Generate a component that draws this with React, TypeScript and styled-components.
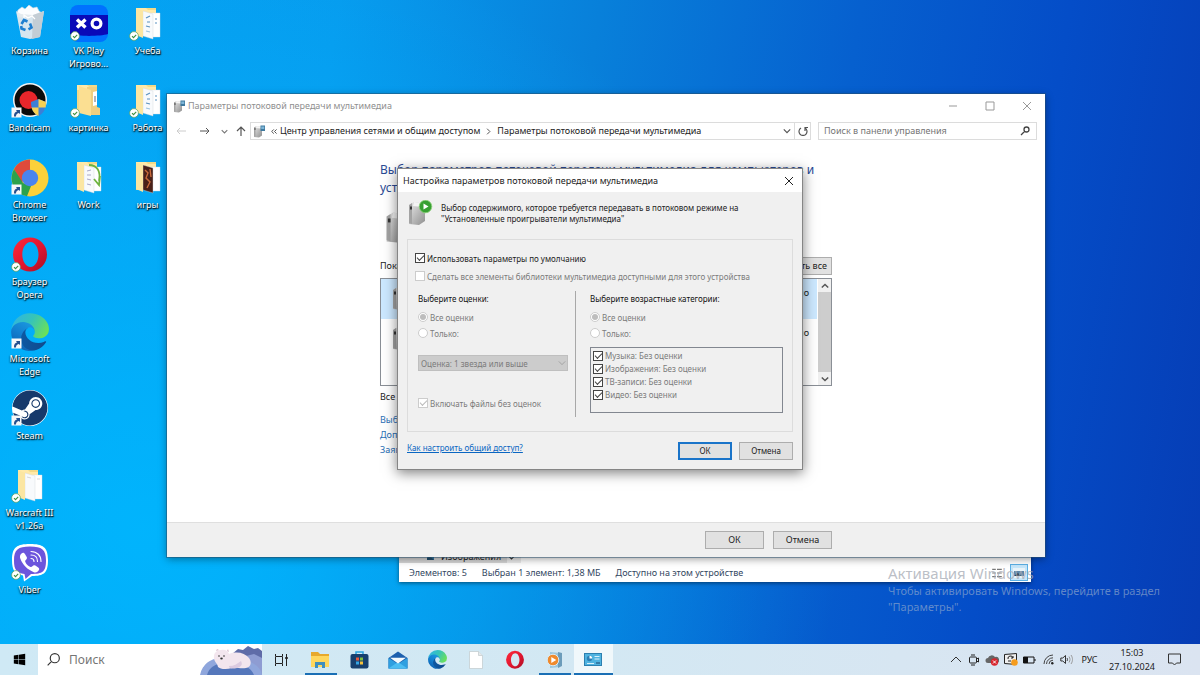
import React, { useId } from "react";
import styled, { createGlobalStyle, css } from "styled-components";
import { FaSteam, FaWindows } from "react-icons/fa";

const ui = `"Noto Sans", "Open Sans", sans-serif`;

const GlobalStyle = createGlobalStyle`
  * { box-sizing: border-box; }
  body { margin: 0; font-family: ${ui}; font-size: 9px; line-height: 14px; color: #222; }
  button, input, select { font: inherit; color: inherit; margin: 0; }
  h1, h2, p, ul { margin: 0; padding: 0; font-weight: 400; }
  ul { list-style: none; }
  svg { display: block; flex: none; }
`;

/* ---------- desktop ---------- */

const Screen = styled.div`
  display: flex;
  flex-direction: column;
  min-height: 100vh;
  background:
    radial-gradient(ellipse 58% 90% at 12% 78%, rgba(0, 184, 255, 0.85), rgba(0, 168, 255, 0) 100%),
    linear-gradient(99deg, #04a2f2 0%, #079bee 26%, #0880da 46%, #0660cf 66%, #044dc8 82%, #063cb4 100%);
  overflow: hidden;
`;

const Desktop = styled.main`
  position: relative;
  flex: 1;
  min-height: 600px;
`;

const IconColumns = styled.div`
  display: flex;
`;

const IconColumn = styled.ul`
  display: flex;
  flex-direction: column;
  width: 59px;
`;

const Shortcut = styled.li`
  display: flex;
  flex-direction: column;
  align-items: center;
  gap: 1px;
  height: 77px;
  padding-top: 5px;
  color: #fff;
  font-size: 9px;
  line-height: 13px;
  text-align: center;
  white-space: pre-line;
  text-shadow: 0 1px 2px #000, 1px 1px 1px rgba(0, 0, 0, 0.8);
`;

const Picture = styled.div`
  position: relative;
  width: 38px;
  height: 38px;
`;

const Badge = styled.div`
  position: absolute;
  left: 0;
  bottom: 2px;
`;

const SyncBadge = () => (
  <Badge>
    <svg width="10" height="10" viewBox="0 0 10 10">
      <circle cx="5" cy="5" r="4.4" fill="#fff" stroke="#5aa05a" strokeWidth=".7" />
      <path d="M3 5.1l1.5 1.5L7.2 3.8" fill="none" stroke="#3f8f3f" strokeWidth="1.1" />
    </svg>
  </Badge>
);

const LinkBadge = () => (
  <Badge>
    <svg width="11" height="11" viewBox="0 0 11 11">
      <rect x=".5" y=".5" width="10" height="10" fill="#f7f7f7" />
      <path d="M3 9.5C2.8 6.500 4 5 6 4.600L5 3h4v4L7.800 6C5.800 6.500 5 7.500 5 9.500z" fill="#24508f" />
    </svg>
  </Badge>
);

const BinIcon = () => (
  <svg width="38" height="38" viewBox="0 0 38 38">
    <path d="M7 5l4-3 3 2 4-4 4 3 4-1 2 4 3 2-2 4H8L6 8z" fill="#fbfdff" stroke="#c5d6e2" strokeWidth=".6" />
    <path d="M5 6l5 3 12 1 11-4-4 26-10 2-9-2z" fill="#e2e9ee" opacity=".95" />
    <path d="M22 10l11-4-4 26-8 2z" fill="#c3cdd5" />
    <path d="M13 14v-4l4 3 4-2 3 3" fill="none" stroke="#fff" strokeWidth="1.200" />
    <g fill="none" stroke="#1f7fd0" strokeWidth="2.600">
      <path d="M10.500 19l2.500-4 3.500 1.500" /><path d="M19 18.500l1.500 4-3 1.800" /><path d="M14.500 25l-4-1.500-.3-2.500" />
    </g>
  </svg>
);

const VkPlayIcon = () => (
  <svg width="38" height="38" viewBox="0 0 38 38">
    <rect width="38" height="37" rx="8" fill="#0072ff" />
    <path d="M0 10h38v19c-8 2.500-30 2.500-38 0z" fill="#0a0ab8" />
    <path d="M7 14.500l8.500 8M15.500 14.500l-8.500 8" stroke="#fff" strokeWidth="3.400" />
    <circle cx="26.500" cy="18.500" r="4.400" fill="none" stroke="#fff" strokeWidth="3.200" />
  </svg>
);

const BandicamIcon = () => (
  <svg width="38" height="38" viewBox="0 0 38 38">
    <circle cx="19" cy="18" r="17" fill="#f4f4f4" />
    <circle cx="19" cy="18" r="15.500" fill="#0b0b0b" />
    <circle cx="17.500" cy="18" r="9" fill="#e8262b" />
    <path d="M20 20l7.500-3 7.500 3c0 7-2.500 11.500-7.500 14-5-2.500-7.500-7-7.500-14z" fill="#3c7fd6" />
    <path d="M27.500 17l7.500 3c0 2 0 3.500-.6 5.500h-6.900zM27.500 25.500V34c-3.600-1.800-6-4.500-7-8.500z" fill="#f7d154" />
  </svg>
);

const ChromeIcon = () => (
  <svg width="38" height="38" viewBox="0 0 38 38">
    <circle cx="19" cy="19" r="18.500" fill="#fbd13a" />
    <path d="M19 .500V12L10.500 24 3 10A18.500 18.500 0 0 1 19 .500z" fill="#df4a3b" />
    <path d="M3 10L12 24l8 3-4 10.300A18.500 18.500 0 0 1 3 10z" fill="#2ba24c" />
    <circle cx="19" cy="19" r="8.200" fill="#4a84ee" />
  </svg>
);

const OperaIcon = ({ size = 38 }: { size?: number }) => {
  const id = useId();
  return (
    <svg width={size} height={size} viewBox="0 0 38 38">
      <defs>
        <linearGradient id={id} x1="0" y1="0" x2="1" y2="1">
          <stop offset="0" stopColor="#ff2b3a" /><stop offset=".55" stopColor="#e01530" /><stop offset="1" stopColor="#a80f22" />
        </linearGradient>
      </defs>
      <path fillRule="evenodd" fill={`url(#${id})`} d="M19 1.500a17 17 0 1 0 0 34 17 17 0 0 0 0-34zM19.500 6c4.500 0 8 5.600 8 12.500S24 31 19.500 31s-8.200-5.600-8.200-12.500S15 6 19.500 6z" />
    </svg>
  );
};

const EdgeIcon = ({ size = 38 }: { size?: number }) => {
  const id = useId();
  return (
    <svg width={size} height={size} viewBox="4 4 257 257">
      <defs>
        <linearGradient id={id + "a"} x1="0" y1="0" x2="1" y2="0">
          <stop offset="0" stopColor="#0c59a4" /><stop offset="1" stopColor="#114a8b" />
        </linearGradient>
        <linearGradient id={id + "b"} x1=".8" y1="0" x2=".3" y2="1">
          <stop offset="0" stopColor="#1b9de2" /><stop offset=".5" stopColor="#1380d0" /><stop offset="1" stopColor="#0b5fb0" />
        </linearGradient>
        <linearGradient id={id + "c"} x1="0" y1=".2" x2="1" y2=".6">
          <stop offset="0" stopColor="#2fb4e4" /><stop offset=".5" stopColor="#36c4b8" /><stop offset="1" stopColor="#6be05a" />
        </linearGradient>
      </defs>
      <path fill={`url(#${id}a)`} d="M235.680 195.460a93.730 93.730 0 01-10.540 4.710 101.870 101.870 0 01-35.900 6.460c-47.320 0-88.540-32.550-88.540-74.320A31.480 31.480 0 01117.130 105c-42.800 1.800-53.800 46.400-53.800 72.530 0 73.880 68.090 81.370 82.760 81.370 7.910 0 19.840-2.300 27-4.560l1.310-.44a128.340 128.340 0 0066.600-52.800 4 4 0 00-5.320-5.640z" />
      <path fill={`url(#${id}b)`} d="M110.340 246.340A79.200 79.200 0 0187.600 225a80.720 80.720 0 0129.530-120c3.120-1.470 8.450-4.130 15.540-4a32.350 32.350 0 0125.690 13 31.880 31.880 0 016.360 18.660c0-.21 24.460-79.600-80-79.600-43.900 0-80 41.660-80 78.210a130.150 130.150 0 0012.110 56 128 128 0 00156.380 67.110 75.550 75.550 0 01-62.780-8z" />
      <path fill={`url(#${id}c)`} d="M156.940 153.780c-.81 1.050-3.300 2.500-3.300 5.660 0 2.610 1.700 5.120 4.720 7.230 14.380 10 41.490 8.680 41.560 8.680a59.560 59.560 0 0030.270-8.350 61.380 61.380 0 0030.430-52.880c.26-22.410-8-37.310-11.340-43.910C228.090 28.760 182.350 4.920 132.630 4.920A128 128 0 004.630 131.120c.48-36.540 36.800-66.050 80-66.050 3.500 0 23.460.34 42 10.070 16.340 8.580 24.900 18.940 30.850 29.210 6.180 10.670 7.280 24.150 7.280 29.520s-2.740 13.330-7.820 19.910z" />
    </svg>
  );
};

const SteamArt = styled.div`
  width: 36px;
  height: 36px;
  margin: 0 1px;
  border-radius: 18px;
  background: #fff;
  color: #16396b;
  font-size: 36px;
`;

const SteamIcon = () => (
  <SteamArt><FaSteam /></SteamArt>
);

const ViberIcon = () => (
  <svg width="38" height="38" viewBox="0 0 38 38">
    <path d="M19 0c13 0 18 3 18 16s-4 16-16 16l-8 5.500-1-6C4 30 1 27 1 16 1 3 6 0 19 0z" fill="#fff" />
    <path d="M19 2.500c12 0 16 3 16 14s-3 13.500-15 13.500l-5.500 5-1-5C5.500 28.500 3 26 3 16.500 3 5.500 7 2.500 19 2.500z" fill="#6c55dc" />
    <path d="M20 11c4 0 6.500 2.500 6.500 6.500M20 7.500c6 0 10 4 10 10M20 14.500c1.800 0 3 1 3 3" fill="none" stroke="#fff" strokeWidth="1.100" strokeLinecap="round" />
    <path d="M10.500 9.500c1.500-1.200 2.600-.8 3.600.8l1.600 2.700c.6 1.200.2 2-.9 2.900-.9.700-.7 1.500-.2 2.500 1 2 2.400 3.400 4.400 4.300 1 .5 1.700.4 2.400-.5.900-1.100 1.800-1.300 2.900-.6l2.600 1.700c1.500 1 1.700 2 .7 3.300-1.200 1.600-2.800 2.400-4.800 1.600-6.500-2.500-11-7-13.500-13.600-.7-2-.3-3.800 1.200-5.100z" fill="#fff" />
  </svg>
);

type FolderKind = "doc" | "plain" | "blank" | "work" | "game";

const FolderIcon = ({ kind }: { kind: FolderKind }) => (
  <svg width="38" height="38" viewBox="0 0 38 38">
    <path d="M7 3h20v28H7z" fill="#f3d987" />
    <path d="M7 3h10l2 2h8v3H7z" fill="#ffe9a8" />
    {kind === "plain" ? (
      <>
        <path d="M17 5h10v20l3 1v7H17z" fill="#f0cf80" />
        <path d="M23 10l4-1v14l-4 1z" fill="#fff" /><path d="M25 14v6" stroke="#667" />
        <path d="M9 4l12 4v26L9 31z" fill="#fbdf92" />
      </>
    ) : (
      <>
        <path d="M21 8h10v24H21z" fill="#fff" stroke="#d5dbe0" strokeWidth=".4" />
        <path d="M14 6l10 3v25l-10-3z" fill={kind === "game" ? "#4a2118" : "#f8fafc"} stroke="#d0d4d8" strokeWidth=".4" />
        <path d="M7 3l7 3v27l-7-3z" fill="#fbe6a2" />
      </>
    )}
    {kind === "doc" && (
      <g fill="none" stroke="#5c92c0" strokeWidth="1.200">
        <path d="M17 13l4-2M18 17h3M17 21l4 1M26 14h2M26 18h2" /><path d="M17 26l4 1" stroke="#9ac3e0" />
      </g>
    )}
    {kind === "blank" && <path d="M16 10l4 1M26 12h3" stroke="#d7d7d7" fill="none" />}
    {kind === "work" && (
      <>
        <path d="M17 12l4-1M17 16h4M17 20l4 1M17 25l4 1" stroke="#a9a9c8" fill="none" />
        <path d="M19 6c8 0 12 6 10 16M30 17l-1 9-5-6" stroke="#6db33f" strokeWidth="1.800" fill="none" />
      </>
    )}
    {kind === "game" && <path d="M16 11l3 3-2 5 4 4-3 6M21 10l1 8" stroke="#c8693a" strokeWidth="1.400" fill="none" />}
  </svg>
);

type ShortcutItem = { label: string; art: React.ReactNode; badge?: "sync" | "link" };

const columns: ShortcutItem[][] = [
  [
    { label: "Корзина", art: <BinIcon /> },
    { label: "Bandicam", art: <BandicamIcon />, badge: "link" },
    { label: "Chrome\nBrowser", art: <ChromeIcon />, badge: "link" },
    { label: "Браузер\nOpera", art: <OperaIcon />, badge: "sync" },
    { label: "Microsoft\nEdge", art: <EdgeIcon />, badge: "link" },
    { label: "Steam", art: <SteamIcon />, badge: "link" },
    { label: "Warcraft III\nv1.26a", art: <FolderIcon kind="blank" />, badge: "sync" },
    { label: "Viber", art: <ViberIcon />, badge: "sync" },
  ],
  [
    { label: "VK Play\nИгрово...", art: <VkPlayIcon />, badge: "sync" },
    { label: "картинка", art: <FolderIcon kind="plain" />, badge: "sync" },
    { label: "Work", art: <FolderIcon kind="work" /> },
  ],
  [
    { label: "Учеба", art: <FolderIcon kind="doc" />, badge: "sync" },
    { label: "Работа", art: <FolderIcon kind="doc" />, badge: "sync" },
    { label: "игры", art: <FolderIcon kind="game" /> },
  ],
];

/* ---------- shared controls ---------- */

const GlyphButton = styled.button<{ $width?: number }>`
  display: flex;
  align-items: center;
  justify-content: center;
  flex: none;
  width: ${(p) => p.$width ?? 24}px;
  height: 100%;
  padding: 0;
  border: 0;
  background: none;
`;

const PushButton = styled.button<{ $primary?: boolean; $small?: boolean }>`
  flex: none;
  min-width: ${(p) => (p.$small ? 54 : 59)}px;
  height: 18px;
  padding: 0 4px;
  border: ${(p) => (p.$primary ? "2px solid #1a74c9" : "1px solid #adadad")};
  background: #e1e1e1;
  font-size: ${(p) => (p.$small ? 8 : 9)}px;
  line-height: 14px;
  white-space: nowrap;
`;

const Glyph = ({ d, size = 10, color = "#555", width = 1 }: { d: string; size?: number; color?: string; width?: number }) => (
  <svg width={size} height={size} viewBox="0 0 10 10" fill="none" stroke={color} strokeWidth={width}>
    <path d={d} />
  </svg>
);

const ServerIcon = ({ size, badge }: { size: number; badge?: "play" | "screen" }) => {
  const id = useId();
  return (
    <svg width={size} height={size} viewBox="0 0 24 26">
      <defs>
        <linearGradient id={id} x1="0" y1="0" x2="1" y2="1">
          <stop offset="0" stopColor="#e8e8e8" /><stop offset="1" stopColor="#8f8f8f" />
        </linearGradient>
      </defs>
      <path d="M1 5l5-3 11 2v17l-6 4-10-1z" fill={`url(#${id})`} />
      <path d="M1 5l3-2v21l-3-1z" fill="#a3a3a3" />
      <path d="M6 2l11 2-3 3-9-1z" fill="#f4f4f4" />
      <path d="M2 6.500h2v3H2z" fill="#333" />
      {badge === "play" && (
        <>
          <circle cx="17.500" cy="6.500" r="6.300" fill="#37a032" stroke="#8fd07c" strokeWidth=".8" />
          <path d="M15.500 3.500l5 3-5 3z" fill="#fff" />
        </>
      )}
      {badge === "screen" && (
        <>
          <rect x="14" y="1" width="9" height="11" fill="#3f7a9f" />
          <rect x="15.500" y="3" width="6" height="5" fill="#7fb6d8" />
        </>
      )}
    </svg>
  );
};

/* ---------- explorer window behind ---------- */

const ExplorerWindow = styled.section`
  position: absolute;
  left: 399px;
  top: 540px;
  width: 632px;
  height: 42px;
  display: flex;
  flex-direction: column;
  background: #fff;
  box-shadow: 0 1px 4px rgba(0, 0, 0, 0.5);
`;

const TreeRow = styled.div`
  display: flex;
  align-items: center;
  gap: 7px;
  width: 122px;
  height: 23px;
  padding: 11px 4px 0 28px;
  background: linear-gradient(90deg, #d5d5d5 108px, #ebebeb 108px);
`;

const StatusBar = styled.footer`
  display: flex;
  align-items: center;
  gap: 15px;
  flex: 1;
  padding: 0 3px 0 10px;
  font-size: 9px;
  color: #33475f;
`;

const ViewModes = styled.div`
  display: flex;
  align-items: center;
  gap: 4px;
  margin-left: auto;
`;

const ViewMode = styled.button<{ $on?: boolean }>`
  display: grid;
  place-items: center;
  width: 18px;
  height: 17px;
  padding: 0;
  border: ${(p) => (p.$on ? "1px solid #5bb0e6" : "0")};
  background: ${(p) => (p.$on ? "#c5e6fa" : "none")};
`;

/* ---------- control panel window ---------- */

const PanelWindow = styled.section`
  position: absolute;
  left: 167px;
  top: 94px;
  width: 878px;
  height: 463px;
  display: flex;
  flex-direction: column;
  background: #fff;
  box-shadow: 0 0 0 1px rgba(40, 80, 110, 0.5), 0 2px 8px rgba(0, 0, 0, 0.4);
`;

const PanelTitle = styled.header`
  display: flex;
  align-items: center;
  gap: 2px;
  height: 24px;
  padding: 0 1px 0 6px;
  color: #8f8f8f;
`;

const Caption = styled.h1`
  flex: 1;
  font-size: 9px;
  line-height: 14px;
`;

const NavBar = styled.nav`
  display: flex;
  align-items: center;
  height: 26px;
  padding: 0 8px 0 2px;
`;

const Address = styled.div`
  display: flex;
  align-items: center;
  flex: 1;
  height: 18px;
  margin-right: 7px;
  border: 1px solid #dcdcdc;
`;

const Crumb = styled.button`
  padding: 0;
  border: 0;
  background: none;
  font-size: 9px;
  line-height: 14px;
  color: #222;
  white-space: nowrap;
`;

const CrumbSpacer = styled.span`
  flex: 1;
`;

const Reload = styled.div`
  height: 100%;
  border-left: 1px solid #dcdcdc;
`;

const SearchField = styled.label`
  display: flex;
  align-items: center;
  width: 219px;
  height: 18px;
  padding: 0 6px 0 5px;
  border: 1px solid #dcdcdc;
`;

const SearchInput = styled.input`
  flex: 1;
  min-width: 0;
  padding: 0;
  border: 0;
  outline: 0;
  background: none;
  color: #222;
  &::placeholder { color: #757575; opacity: 1; }
`;

const PanelBody = styled.div`
  flex: 1;
  width: 452px;
  margin: 0 auto;
  padding-top: 17px;
  line-height: 15px;
`;

const Heading = styled.h2`
  font-size: 12px;
  line-height: 18px;
  color: #2a4a94;
`;

const NameRow = styled.div`
  display: flex;
  align-items: center;
  height: 60px;
  padding-left: 4px;
`;

const ToolbarRow = styled.div`
  display: flex;
  align-items: center;
  justify-content: space-between;
  height: 17px;
  margin-bottom: 4px;
`;

const DeviceList = styled.div`
  display: flex;
  height: 108px;
  margin-bottom: 3px;
  border: 1px solid #8a8f96;
`;

const Devices = styled.ul`
  flex: 1;
`;

const Device = styled.li<{ $selected?: boolean }>`
  display: flex;
  justify-content: space-between;
  height: 40px;
  padding: 6px 8px 0 10px;
  margin-right: 1px;
  background: ${(p) => (p.$selected ? "#cce8ff" : "none")};
`;

const Scrollbar = styled.div`
  display: flex;
  flex-direction: column;
  width: 13px;
  background: #cdcdcd;
`;

const ScrollButton = styled.button`
  display: grid;
  place-items: center;
  height: 13px;
  padding: 0;
  border: 0;
  background: #f0f0f0;
`;

const ScrollTrack = styled.div`
  flex: 1;
`;

const Links = styled.ul`
  margin-top: 8px;
`;

const PanelLink = styled.a`
  color: #2a6fb5;
  text-decoration: none;
`;

const PanelFooter = styled.footer`
  display: flex;
  align-items: center;
  justify-content: flex-end;
  gap: 9px;
  height: 35px;
  padding-right: 213px;
  border-top: 1px solid #dfdfdf;
  background: #f0f0f0;
`;

/* ---------- dialog ---------- */

const DialogWindow = styled.section`
  position: absolute;
  left: 398px;
  top: 169px;
  width: 404px;
  height: 300px;
  display: flex;
  flex-direction: column;
  background: #f0f0f0;
  box-shadow: 0 0 0 1px #858585, 0 3px 12px 1px rgba(0, 0, 0, 0.5);
  font-size: 8px;
  line-height: 11px;
`;

const DialogTitle = styled.header`
  display: flex;
  align-items: center;
  height: 23px;
  padding-left: 5px;
  background: #fff;
`;

const DialogIntro = styled.div`
  display: flex;
  align-items: center;
  gap: 8px;
  height: 47px;
  padding: 0 10px 6px 9px;
`;

const Options = styled.form`
  display: flex;
  flex-direction: column;
  height: 193px;
  margin: 0 9px;
  padding: 9px 6px 0 7px;
  border: 1px solid #dcdcdc;
`;

const Choice = styled.label<{ $muted?: boolean; $height?: number }>`
  display: flex;
  align-items: center;
  gap: 2px;
  height: ${(p) => p.$height ?? 18}px;
  white-space: nowrap;
  color: ${(p) => (p.$muted ? "#7b7b7b" : "#222")};
`;

const box = css`
  appearance: none;
  flex: none;
  display: grid;
  place-items: center;
  width: 10px;
  height: 10px;
  background: #fff;
`;

const Check = styled.input.attrs({ type: "checkbox" })<{ $faint?: boolean }>`
  ${box}
  border: 1px solid ${(p) => (p.$faint ? "#ccc" : "#444")};
  &:checked::after {
    content: "";
    width: 6px;
    height: 3px;
    margin-bottom: 2px;
    border: solid ${(p) => (p.$faint ? "#bbb" : "#444")};
    border-width: 0 0 1px 1px;
    transform: rotate(-45deg);
  }
`;

const Radio = styled.input.attrs({ type: "radio" })`
  ${box}
  border: 1px solid #ccc;
  border-radius: 5px;
  &:checked::after {
    content: "";
    width: 6px;
    height: 6px;
    border-radius: 3px;
    background: #bdbdbd;
  }
`;

const Ratings = styled.div`
  display: flex;
  padding: 6px 3px 0;
`;

const RatingColumn = styled.div<{ $divided?: boolean }>`
  display: flex;
  flex-direction: column;
  flex: none;
  width: ${(p) => (p.$divided ? 158 : 207)}px;
  height: 126px;
  padding: 2px ${(p) => (p.$divided ? 7 : 0)}px 0 ${(p) => (p.$divided ? 0 : 14)}px;
  border-right: ${(p) => (p.$divided ? "1px solid #a8a8a8" : "0")};
`;

const GroupName = styled.h2`
  font-size: 8px;
  line-height: 11px;
  margin-bottom: 5px;
  color: #111;
`;

const SelectBox = styled.div`
  position: relative;
  margin: 14px 0 24px;
  svg { position: absolute; right: 2px; top: 4px; }
`;

const Dropdown = styled.select`
  appearance: none;
  display: block;
  width: 100%;
  height: 16px;
  padding: 0 2px;
  border: 1px solid #bfbfbf;
  border-radius: 0;
  background: #ccc;
  opacity: 1;
  color: #7b7b7b;
`;

const Categories = styled.div`
  height: 66px;
  margin-top: 6px;
  padding: 1px 2px;
  border: 1px solid #828790;
`;

const DialogFooter = styled.footer`
  display: flex;
  gap: 7px;
  padding: 10px 9px 0;
`;

const HelpLink = styled.a`
  flex: 1;
  color: #0a66c2;
`;

/* ---------- watermark ---------- */

const Watermark = styled.aside`
  position: absolute;
  left: 888px;
  top: 563px;
  width: 290px;
  color: rgba(150, 172, 205, 0.65);
  font-size: 11px;
  line-height: 16px;
  pointer-events: none;
`;

const WatermarkTitle = styled.p`
  font-size: 15px;
  line-height: 20px;
  color: rgba(165, 170, 180, 0.75);
`;

/* ---------- taskbar ---------- */

const Taskbar = styled.footer`
  display: flex;
  align-items: stretch;
  height: 31px;
  background: linear-gradient(90deg, #cfe9f5, #d3e8f3 50%, #dbe4f1);
`;

const StartButton = styled.button`
  display: grid;
  place-items: center;
  width: 38px;
  padding: 0;
  border: 0;
  background: none;
  color: #000;
`;

const TaskSearch = styled.label`
  display: flex;
  align-items: center;
  gap: 9px;
  width: 224px;
  padding-left: 9px;
  background: #fff;
  font-size: 12px;
`;

const TaskButton = styled.button<{ $open?: boolean; $active?: boolean }>`
  display: flex;
  align-items: center;
  justify-content: center;
  width: 39px;
  padding: 0 1px 0 0;
  border: 0;
  position: relative;
  background: ${(p) => (p.$active ? "#f0f8fb" : "none")};
  &::after {
    content: "";
    display: ${(p) => (p.$open ? "block" : "none")};
    position: absolute;
    left: ${(p) => (p.$active ? 0 : 4)}px;
    right: ${(p) => (p.$active ? 0 : 3)}px;
    bottom: 0;
    height: 2px;
    background: #1a6fb5;
  }
`;

const Tray = styled.div`
  display: flex;
  align-items: center;
  margin-left: auto;
  padding-right: 12px;
`;

const TrayItem = styled.button<{ $width?: number }>`
  display: grid;
  place-items: center;
  width: ${(p) => p.$width ?? 18}px;
  height: 31px;
  padding: 0;
  border: 0;
  background: none;
  font-size: 9px;
  line-height: 14px;
`;

const Clock = styled.time`
  width: 56px;
  font-size: 9px;
  line-height: 14px;
  text-align: center;
`;

const Bear = () => (
  <svg width="62" height="31" viewBox="0 0 62 31">
    <path d="M32 10l6-5 5 1 5-4 6 3 4-1 4 3v24H32z" fill="#5f6ca8" />
    <path d="M46 12l8-2 8 4v17H44z" fill="#8e9cd2" />
    <path d="M0 31C3 18 14 12 30 14c18 1 30 6 32 17z" fill="#8fa6dc" />
    <path d="M7 31c2-8 9-12 20-12 15 0 24 4 27 12z" fill="#5577bb" />
    <path d="M14 12c0-3 3-6 7-6 4-1 7 1 8 4 8-3 16-1 20 4 3 4 2 9-3 10-6 1-9-1-14 0-6 2-12 1-14-1 0-3-5-6-4-11z" fill="#f3e6ee" />
    <path d="M29 22c5 0 8-2 12-5 2 4 0 6-4 7-4 1-8 1-8-2z" fill="#dccbe0" />
    <path d="M16 7l1-2 2 1zM27 7l1-2 1 3z" fill="#d8bccd" />
    <circle cx="19" cy="12" r=".8" fill="#333" /><circle cx="24" cy="12" r=".8" fill="#333" />
    <ellipse cx="21.500" cy="14.500" rx="1.300" ry="1" fill="#333" />
  </svg>
);

const categories = ["Музыка: Без оценки", "Изображения: Без оценки", "ТВ-записи: Без оценки", "Видео: Без оценки"];

export default function App() {
  return (
    <Screen>
      <GlobalStyle />
      <Desktop>
        <IconColumns>
          {columns.map((items, i) => (
            <IconColumn key={i}>
              {items.map((item) => (
                <Shortcut key={item.label}>
                  <Picture>
                    {item.art}
                    {item.badge === "sync" && <SyncBadge />}
                    {item.badge === "link" && <LinkBadge />}
                  </Picture>
                  {item.label}
                </Shortcut>
              ))}
            </IconColumn>
          ))}
        </IconColumns>

        <ExplorerWindow aria-label="Проводник">
          <TreeRow>
            <svg width="7" height="8" viewBox="0 0 7 8"><path d="M0 1h7v6H0z" fill="#3a7ca8" /><path d="M0 5l3-2 4 4H0z" fill="#25506e" /></svg>
            <span>Изображения</span>
            <Glyph size={7} color="#333" width={1.500} d="M1 3l4 4 4-4" />
          </TreeRow>
          <StatusBar>
            <span>Элементов: 5</span>
            <span>Выбран 1 элемент: 1,38 МБ</span>
            <span>Доступно на этом устройстве</span>
            <ViewModes>
              <ViewMode aria-label="Таблица">
                <Glyph size={12} color="#777" d="M1 2h3M5 2h4M1 5h3M5 5h4M1 8h3M5 8h4" />
              </ViewMode>
              <ViewMode $on aria-label="Крупные значки">
                <svg width="12" height="10" viewBox="0 0 12 10">
                  <rect width="12" height="10" fill="#e9f4fa" /><rect x="1" y="3" width="10" height="5" fill="#5b86a8" /><path d="M1 8l4-3 3 3z" fill="#2c3e50" />
                </svg>
              </ViewMode>
            </ViewModes>
          </StatusBar>
        </ExplorerWindow>

        <PanelWindow aria-label="Параметры потоковой передачи мультимедиа">
          <PanelTitle>
            <ServerIcon size={13} badge="screen" />
            <Caption>Параметры потоковой передачи мультимедиа</Caption>
            <GlyphButton $width={35} aria-label="Свернуть"><Glyph color="#999" d="M1 5h8" /></GlyphButton>
            <GlyphButton $width={35} aria-label="Развернуть"><Glyph color="#999" d="M1 1h8v8H1z" /></GlyphButton>
            <GlyphButton $width={35} aria-label="Закрыть"><Glyph color="#999" d="M1 1l8 8M9 1l-8 8" /></GlyphButton>
          </PanelTitle>
          <NavBar>
            <GlyphButton aria-label="Назад"><Glyph color="#ccc" d="M10 5H1M4 2L1 5l3 3" /></GlyphButton>
            <GlyphButton aria-label="Вперед"><Glyph color="#555" d="M0 5h9M6 2l3 3-3 3" /></GlyphButton>
            <GlyphButton $width={14} aria-label="Последние"><Glyph size={7} color="#777" width={1.500} d="M1 3l4 4 4-4" /></GlyphButton>
            <GlyphButton $width={19} aria-label="Вверх"><Glyph color="#555" width={1.200} d="M5 10V1M1 5l4-4 4 4" /></GlyphButton>
            <Address>
              <GlyphButton $width={17} aria-label="Значок"><ServerIcon size={13} badge="screen" /></GlyphButton>
              <GlyphButton $width={12} aria-label="Все уровни"><Glyph size={7} color="#333" width={1.200} d="M4 2L1 5l3 3M8 2L5 5l3 3" /></GlyphButton>
              <Crumb>Центр управления сетями и общим доступом</Crumb>
              <GlyphButton $width={17} aria-label="Подуровни"><Glyph size={7} color="#333" width={1.200} d="M3 1l4 4-4 4" /></GlyphButton>
              <Crumb>Параметры потоковой передачи мультимедиа</Crumb>
              <CrumbSpacer />
              <GlyphButton $width={14} aria-label="История"><Glyph size={8} width={1.500} d="M1 3l4 4 4-4" /></GlyphButton>
              <Reload>
                <GlyphButton $width={15} aria-label="Обновить"><Glyph width={1.200} d="M3 2a4 4 0 1 0 4 0M7 5V1.500h3" /></GlyphButton>
              </Reload>
            </Address>
            <SearchField>
              <SearchInput aria-label="Поиск" placeholder="Поиск в панели управления" />
              <Glyph width={1.300} color="#444" d="M1 9l3.500-3.500M9 3.500a2.500 2.500 0 1 1-5 0 2.500 2.500 0 0 1 5 0z" />
            </SearchField>
          </NavBar>
          <PanelBody>
            <Heading>Выбор параметров потоковой передачи мультимедиа для компьютеров и устройств</Heading>
            <NameRow><ServerIcon size={34} /></NameRow>
            <ToolbarRow>
              <span>Показать:</span>
              <PushButton>Блокировать все</PushButton>
            </ToolbarRow>
            <DeviceList>
              <Devices>
                <Device $selected><ServerIcon size={26} /><span>Разрешено</span></Device>
                <Device><ServerIcon size={26} /><span>Разрешено</span></Device>
              </Devices>
              <Scrollbar>
                <ScrollButton aria-label="Прокрутить вверх"><Glyph size={8} width={1.800} d="M1 7l4-4 4 4" /></ScrollButton>
                <ScrollTrack />
                <ScrollButton aria-label="Прокрутить вниз"><Glyph size={8} width={1.800} d="M1 3l4 4 4-4" /></ScrollButton>
              </Scrollbar>
            </DeviceList>
            <p>Все устройства</p>
            <Links>
              <li><PanelLink href="#group">Выбрать</PanelLink></li>
              <li><PanelLink href="#more">Дополнительно</PanelLink></li>
              <li><PanelLink href="#privacy">Заявление</PanelLink></li>
            </Links>
          </PanelBody>
          <PanelFooter>
            <PushButton>ОК</PushButton>
            <PushButton>Отмена</PushButton>
          </PanelFooter>
        </PanelWindow>

        <DialogWindow role="dialog" aria-label="Настройка параметров потоковой передачи мультимедиа">
          <DialogTitle>
            <Caption>Настройка параметров потоковой передачи мультимедиа</Caption>
            <GlyphButton $width={27} aria-label="Закрыть"><Glyph color="#222" d="M1 1l8 8M9 1l-8 8" /></GlyphButton>
          </DialogTitle>
          <DialogIntro>
            <ServerIcon size={26} badge="play" />
            <p>Выбор содержимого, которое требуется передавать в потоковом режиме на<br />"Установленные проигрыватели мультимедиа"</p>
          </DialogIntro>
          <Options>
            <Choice><Check defaultChecked />Использовать параметры по умолчанию</Choice>
            <Choice $muted><Check $faint disabled />Сделать все элементы библиотеки мультимедиа доступными для этого устройства</Choice>
            <Ratings>
              <RatingColumn $divided>
                <GroupName>Выберите оценки:</GroupName>
                <Choice $muted $height={16}><Radio name="stars" defaultChecked disabled />Все оценки</Choice>
                <Choice $muted $height={16}><Radio name="stars" disabled />Только:</Choice>
                <SelectBox>
                  <Dropdown disabled aria-label="Оценка"><option>Оценка: 1 звезда или выше</option></Dropdown>
                  <Glyph size={8} color="#999" d="M1 3l4 4 4-4" />
                </SelectBox>
                <Choice $muted $height={16}><Check $faint defaultChecked disabled />Включать файлы без оценок</Choice>
              </RatingColumn>
              <RatingColumn>
                <GroupName>Выберите возрастные категории:</GroupName>
                <Choice $muted $height={16}><Radio name="age" defaultChecked disabled />Все оценки</Choice>
                <Choice $muted $height={16}><Radio name="age" disabled />Только:</Choice>
                <Categories>
                  {categories.map((name) => (
                    <Choice key={name} $muted $height={13}><Check defaultChecked />{name}</Choice>
                  ))}
                </Categories>
              </RatingColumn>
            </Ratings>
          </Options>
          <DialogFooter>
            <HelpLink href="#help">Как настроить общий доступ?</HelpLink>
            <PushButton $small $primary>ОК</PushButton>
            <PushButton $small>Отмена</PushButton>
          </DialogFooter>
        </DialogWindow>

        <Watermark>
          <WatermarkTitle>Активация Windows</WatermarkTitle>
          <p>Чтобы активировать Windows, перейдите в раздел "Параметры".</p>
        </Watermark>
      </Desktop>

      <Taskbar>
        <StartButton aria-label="Пуск"><FaWindows size={13} /></StartButton>
        <TaskSearch>
          <Glyph size={13} color="#333" width={0.900} d="M.5 9.500L3.500 6.500M9.500 4a3.500 3.500 0 1 1-7 0 3.500 3.500 0 0 1 7 0z" />
          <SearchInput aria-label="Поиск на компьютере" placeholder="Поиск" />
          <Bear />
        </TaskSearch>
        <TaskButton aria-label="Представление задач">
          <svg width="14" height="14" viewBox="0 0 14 14" fill="none" stroke="#222">
            <path d="M1.500 1v2.500h7V1M1.500 13v-2.500h7V13M1.500 4v6M8.500 4v6M12.500 1v12" /><path d="M12.500 4v2" strokeWidth="2.500" />
          </svg>
        </TaskButton>
        <TaskButton $open aria-label="Проводник">
          <svg width="20" height="18" viewBox="0 0 20 18">
            <path d="M1 1h7l2 2h9v13H1z" fill="#e7a92d" /><path d="M1 5h18v11H1z" fill="#ffd75e" /><path d="M5 17v-6h10v6h-3v-3H8v3z" fill="#3f8fc0" />
          </svg>
        </TaskButton>
        <TaskButton aria-label="Магазин">
          <svg width="19" height="19" viewBox="0 0 19 19">
            <path d="M6 5V2h7v3" fill="none" stroke="#2aa3e0" strokeWidth="1.500" /><rect x=".5" y="4" width="18" height="14.500" rx="2" fill="#17406f" />
            <path d="M6 7.500h3v3H6z" fill="#e8573c" /><path d="M10 7.500h3v3h-3z" fill="#7fbf3c" /><path d="M6 11.500h3v3H6z" fill="#35a5e5" /><path d="M10 11.500h3v3h-3z" fill="#f8c23a" />
          </svg>
        </TaskButton>
        <TaskButton aria-label="Почта">
          <svg width="20" height="18" viewBox="0 0 20 18">
            <path d="M.5 7L10 .5 19.500 7v10.500H.5z" fill="#1c5fae" />
            <path d="M.5 7L10 13l9.500-6v10.500H.5z" fill="#2f9fe0" /><path d="M.5 17.500L10 11l9.500 6.500z" fill="#4cbdf2" />
            <path d="M2 6.800h16l-8 5.700z" fill="#f4fafd" />
          </svg>
        </TaskButton>
        <TaskButton aria-label="Edge"><EdgeIcon size={19} /></TaskButton>
        <TaskButton aria-label="Документ">
          <svg width="14" height="18" viewBox="0 0 14 18"><path d="M.5 .5h9l4 4v13H.5z" fill="#fff" stroke="#c0c8cc" strokeWidth=".7" /><path d="M9.500 .5v4h4" fill="#e6e9eb" stroke="#c0c8cc" strokeWidth=".7" /></svg>
        </TaskButton>
        <TaskButton aria-label="Opera"><OperaIcon size={20} /></TaskButton>
        <TaskButton $open aria-label="Проигрыватель">
          <svg width="17" height="18" viewBox="0 0 17 18">
            <path d="M4 1l10 1v14l-10 1z" fill="#9cc6dc" /><path d="M12 1l4 1v13l-4 2z" fill="#6c9cba" /><circle cx="7" cy="9" r="5.800" fill="#ef8a2d" stroke="#dbe9f0" /><path d="M5.300 6l5 3-5 3z" fill="#fff" />
          </svg>
        </TaskButton>
        <TaskButton $open $active aria-label="Панель управления">
          <svg width="18" height="13" viewBox="0 0 18 13">
            <rect x=".5" y=".5" width="17" height="12" fill="#4fb3e0" stroke="#2c80b0" /><circle cx="5.500" cy="5.500" r="2.700" fill="#2b7fb4" /><path d="M5.500 5.500V2.800a2.700 2.700 0 0 1 2.700 2.700z" fill="#fff" /><path d="M10.500 3.500h5M10.500 6h5M3 10.500h7" stroke="#d9f0fa" /><path d="M12 10h4" stroke="#2b6a94" strokeWidth="1.500" />
          </svg>
        </TaskButton>
        <Tray>
          <TrayItem $width={19} aria-label="Скрытые значки"><Glyph color="#333" d="M0 7l5-5 5 5" /></TrayItem>
          <TrayItem aria-label="Устройство">
            <svg width="12" height="12" viewBox="0 0 12 12" fill="none" stroke="#222"><rect x="1.500" y="3" width="7" height="6" rx="1" /><path d="M3 1h4M3 11h4M8.500 5l2-1v4l-2-1" /></svg>
          </TrayItem>
          <TrayItem aria-label="OneDrive">
            <svg width="14" height="12" viewBox="0 0 14 12"><path d="M3 9a2.500 2.500 0 0 1 0-5 4 4 0 0 1 7-1 3 3 0 0 1 2 6z" fill="#666" /><circle cx="9.500" cy="8" r="3.700" fill="#d8262f" /><path d="M8 6.500l3 3M11 6.500l-3 3" stroke="#fff" /></svg>
          </TrayItem>
          <TrayItem $width={19} aria-label="Обновления">
            <svg width="14" height="13" viewBox="0 0 14 13"><path d="M.5 1.500l12-1v11l-12-1z" fill="#eee" stroke="#222" /><path d="M4 6a2.500 2.500 0 0 1 5-1M9 3v2H7M4 8h3" fill="none" stroke="#222" /><circle cx="10.500" cy="9.500" r="3.300" fill="#f59b1c" /></svg>
          </TrayItem>
          <TrayItem $width={19} aria-label="Батарея">
            <svg width="13" height="8" viewBox="0 0 13 8"><path d="M.5 1h10.500v6H.5z" fill="none" stroke="#111" /><path d="M1 1h4v6H1z" fill="#111" /><path d="M12 3v2" stroke="#111" /></svg>
          </TrayItem>
          <TrayItem aria-label="Сеть">
            <svg width="11" height="11" viewBox="0 0 11 11" fill="none" stroke="#444"><path d="M1 10A9 9 0 0 1 10 1M3.500 10A6.500 6.500 0 0 1 10 3.800M6 10a4 4 0 0 1 4-3.800" /><circle cx="9.300" cy="9.300" r="1.200" fill="#222" stroke="none" /></svg>
          </TrayItem>
          <TrayItem aria-label="Громкость">
            <svg width="13" height="11" viewBox="0 0 13 11" fill="none" stroke="#333"><path d="M.8 4v3h2L5.500 9.500v-8L2.800 4z" /><path d="M7 4c.6 1 .6 2 0 3" /><path d="M9 2.500c1.300 2 1.300 4 0 6M11 1c2 3 2 6 0 9" stroke="#999" /></svg>
          </TrayItem>
          <TrayItem $width={29}>РУС</TrayItem>
          <Clock>15:03<br />27.10.2024</Clock>
          <TrayItem $width={28} aria-label="Уведомления">
            <svg width="13" height="13" viewBox="0 0 13 13" fill="none" stroke="#333"><path d="M.5 1h12v9H8.500L6.500 12 4.500 10h-4z" /></svg>
          </TrayItem>
        </Tray>
      </Taskbar>
    </Screen>
  );
}
